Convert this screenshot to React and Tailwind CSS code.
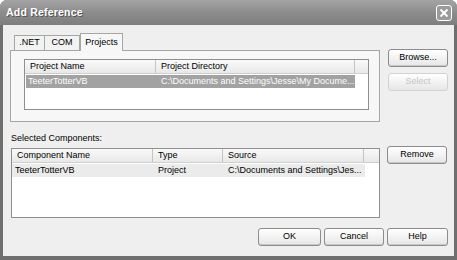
import React from 'react'

const font = { fontFamily: '"Liberation Sans", Arial, sans-serif' }

function Btn({ children, disabled, className = '' }) {
  return (
    <div
      className={`flex items-center justify-center h-[18px] rounded-[3px] border text-[9px] whitespace-nowrap bg-gradient-to-b from-white to-[#e6e6e6] ${
        disabled ? 'border-[#d2d2d2] text-[#c4c4c4]' : 'border-[#8c8c8c] text-black shadow-[inset_0_-1px_0_#c8c8c8]'
      } ${className}`}
    >
      {children}
    </div>
  )
}

function Header({ cols }) {
  return (
    <div className="flex h-[14px] bg-gradient-to-b from-[#fafafa] to-[#e8e8e8] border-b border-[#cfcfcf]">
      {cols.map((c, i) => (
        <div
          key={i}
          className="flex items-center pl-[5px] text-[9px] text-black whitespace-nowrap border-r border-[#c4c4c4] shrink-0"
          style={{ width: c.w }}
        >
          {c.label}
        </div>
      ))}
      <div className="flex-1" />
    </div>
  )
}

export default function App() {
  return (
    <div className="w-[457px] h-[260px] bg-[#6f6f6f] rounded-t-[7px] flex flex-col overflow-hidden" style={font}>
      {/* Title bar */}
      <div className="h-[25px] shrink-0 flex items-center justify-between pl-[6px] pr-[5px] bg-gradient-to-b from-[#a4a4a4] via-[#8c8c8c] to-[#7e7e7e]">
        <span className="text-white font-bold text-[10.5px] tracking-[0.2px] [text-shadow:1px_1px_0_#555]">Add Reference</span>
        <div className="w-[16px] h-[16px] rounded-[3px] border border-white bg-[#9a9a9a] flex items-center justify-center">
          <svg width="10" height="10" viewBox="0 0 10 10">
            <path d="M1.5 1.5 L8.5 8.5 M8.5 1.5 L1.5 8.5" stroke="white" strokeWidth="1.8" />
          </svg>
        </div>
      </div>

      {/* Body */}
      <div className="flex-1 mx-[3px] mb-[4px] bg-[#efefef] flex flex-col pl-[7px] pr-[6px]">
        <div className="flex mt-[7px]">
          {/* Tabs + panel */}
          <div className="w-[370px] flex flex-col">
            <div className="flex items-end h-[18px] pl-[4px]">
              <div className="h-[15px] w-[31px] border border-b-0 border-[#a6a6a6] bg-[#f2f2f2] text-[9px] flex items-center justify-center">.NET</div>
              <div className="h-[15px] w-[35px] border border-b-0 border-l-0 border-[#a6a6a6] bg-[#f2f2f2] text-[9px] flex items-center justify-center">COM</div>
              <div className="h-[18px] w-[43px] border border-b-0 border-[#a6a6a6] bg-[#f7f7f7] text-[9px] flex items-center justify-center -mb-px relative z-10">Projects</div>
            </div>
            <div className="h-[72px] border border-[#a6a6a6] bg-[#f7f7f7] pt-[8px] pl-[13px] pr-[10px]">
              <div className="h-[51px] border border-[#8f8f8f] bg-white">
                <Header cols={[{ label: 'Project Name', w: 131 }, { label: 'Project Directory', w: 199 }]} />
                <div className="mt-[1px] ml-[1px] w-[329px] h-[13px] bg-[#a2a2a2] text-white text-[9px] whitespace-nowrap flex items-center">
                  <span className="w-[130px] pl-[2px]">TeeterTotterVB</span>
                  <span className="pl-[5px]">C:\Documents and Settings\Jesse\My Docume...</span>
                </div>
              </div>
            </div>
          </div>
          {/* Right buttons */}
          <div className="ml-[8px] w-[60px] flex flex-col gap-[6px] mt-[17px]">
            <Btn>Browse...</Btn>
            <Btn disabled>Select</Btn>
          </div>
        </div>

        <div className="mt-[10px] text-[9px] text-black leading-[12px] pl-[1px]">Selected Components:</div>

        <div className="flex mt-[2px]">
          <div className="ml-[1px] w-[369px] h-[70px] border border-[#8f8f8f] bg-white mt-[2px]">
            <Header cols={[{ label: 'Component Name', w: 141 }, { label: 'Type', w: 70 }, { label: 'Source', w: 141 }]} />
            <div className="mt-[1px] w-[353px] h-[13px] bg-[#ebebeb] text-black text-[9px] whitespace-nowrap flex items-center">
              <span className="w-[141px] pl-[3px]">TeeterTotterVB</span>
              <span className="w-[70px] pl-[5px]">Project</span>
              <span className="pl-[5px]">C:\Documents and Settings\Jes...</span>
            </div>
          </div>
          <div className="ml-[7px] w-[60px]">
            <Btn>Remove</Btn>
          </div>
        </div>

        <div className="flex justify-end gap-[3px] mt-[10px]">
          <Btn className="w-[63px]">OK</Btn>
          <Btn className="w-[60px]">Cancel</Btn>
          <Btn className="w-[61px]">Help</Btn>
        </div>
      </div>
    </div>
  )
}
